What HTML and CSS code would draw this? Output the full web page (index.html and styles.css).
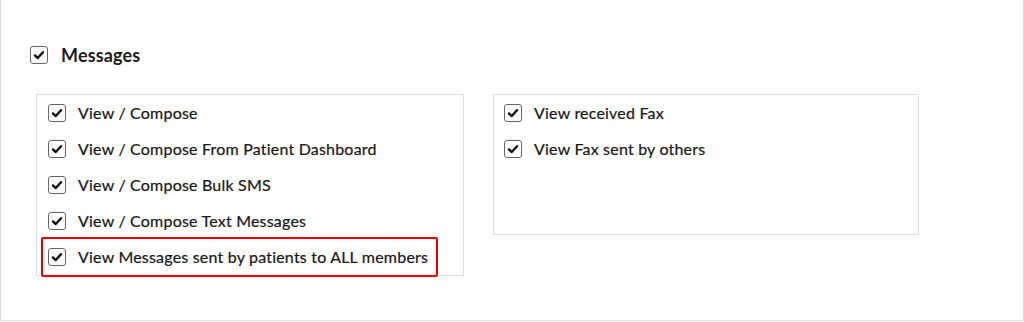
FILE: index.html
```html
<!DOCTYPE html>
<html>
<head>
<meta charset="utf-8">
<link rel="stylesheet" href="styles.css">
</head>
<body>
<div class="card">
  <div class="section-head">
    <span class="cb cb-lg"><svg viewBox="0 0 16 16"><path d="M3.4 8.5 L6.5 11.5 L12.6 4.8"/></svg></span>
    <span class="head-label">Messages</span>
  </div>
  <div class="groups">
    <div class="group group-left">
      <div class="row"><span class="cb"><svg viewBox="0 0 16 16"><path d="M3.4 8.5 L6.5 11.5 L12.6 4.8"/></svg></span><span class="label">View / Compose</span></div>
      <div class="row"><span class="cb"><svg viewBox="0 0 16 16"><path d="M3.4 8.5 L6.5 11.5 L12.6 4.8"/></svg></span><span class="label">View / Compose From Patient Dashboard</span></div>
      <div class="row"><span class="cb"><svg viewBox="0 0 16 16"><path d="M3.4 8.5 L6.5 11.5 L12.6 4.8"/></svg></span><span class="label">View / Compose Bulk SMS</span></div>
      <div class="row"><span class="cb"><svg viewBox="0 0 16 16"><path d="M3.4 8.5 L6.5 11.5 L12.6 4.8"/></svg></span><span class="label">View / Compose Text Messages</span></div>
      <div class="row row-highlight"><span class="cb"><svg viewBox="0 0 16 16"><path d="M3.4 8.5 L6.5 11.5 L12.6 4.8"/></svg></span><span class="label">View Messages sent by patients to ALL members</span></div>
    </div>
    <div class="group group-right">
      <div class="row"><span class="cb"><svg viewBox="0 0 16 16"><path d="M3.4 8.5 L6.5 11.5 L12.6 4.8"/></svg></span><span class="label">View received Fax</span></div>
      <div class="row"><span class="cb"><svg viewBox="0 0 16 16"><path d="M3.4 8.5 L6.5 11.5 L12.6 4.8"/></svg></span><span class="label">View Fax sent by others</span></div>
    </div>
  </div>
</div>
</body>
</html>
```

FILE: styles.css
```css
html, body {
  margin: 0;
  padding: 0;
  background: #fff;
  overflow: hidden;
}
body {
  font-family: Lato, "Open Sans", Arial, sans-serif;
  color: #161616;
}
.card {
  box-sizing: border-box;
  width: 1024px;
  height: 321px;
  padding-top: 45px;
  border: 1px solid #dcdcdc;
  border-top: none;
}
.section-head {
  display: flex;
  align-items: center;
  gap: 13px;
  height: 19px;
  padding-left: 29px;
}
.head-label {
  font-size: 18px;
  font-weight: 700;
  color: #1c1c1c;
  letter-spacing: 0.15px;
}
.groups {
  display: flex;
  gap: 29px;
  margin-top: 30px;
  padding-left: 35px;
  align-items: flex-start;
}
.group {
  box-sizing: border-box;
  border: 1px solid #dedede;
}
.group-left {
  width: 428px;
}
.group-right {
  width: 426px;
  height: 141px;
}
.row {
  position: relative;
  display: flex;
  align-items: center;
  gap: 12px;
  height: 36px;
  padding-left: 11px;
}
.group-right .row {
  padding-left: 10px;
}
.row-highlight::after {
  content: "";
  position: absolute;
  top: -2px;
  bottom: -2px;
  left: 4px;
  width: 397px;
  box-sizing: border-box;
  border: 2px solid #f00000;
  border-radius: 2px;
}
.label {
  font-size: 16px;
  letter-spacing: 0.2px;
  color: #161616;
  white-space: nowrap;
  -webkit-text-stroke: 0.2px #161616;
  position: relative;
  top: -1px;
}
.cb {
  box-sizing: border-box;
  width: 18px;
  height: 18px;
  border: 1.5px solid #666;
  border-radius: 3px;
  display: flex;
  align-items: center;
  justify-content: center;
  flex: none;
}
.cb svg {
  width: 14px;
  height: 14px;
}
.cb svg path {
  fill: none;
  stroke: #111;
  stroke-width: 2.7;
  stroke-linecap: round;
  stroke-linejoin: round;
}
```
